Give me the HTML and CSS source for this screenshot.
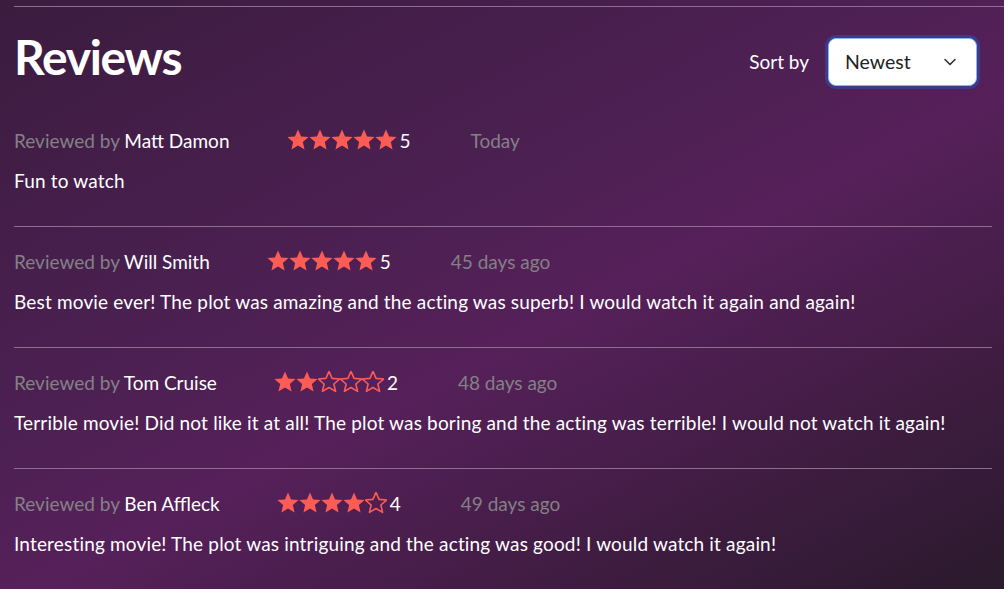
FILE: index.html
```html
<!DOCTYPE html>
<html>
<head>
<meta charset="utf-8">
<link rel="stylesheet" href="styles.css">
</head>
<body>
<div class="page">
  <div class="topline"></div>
  <div class="wrap">
    <header class="header">
      <h1 class="title">Reviews</h1>
      <div class="sort">
        <span class="sort-label">Sort by</span>
        <div class="select">
          <span>Newest</span>
          <svg class="chev" width="14" height="14" viewBox="0 0 14 14"><path d="M2 4.5 L7 9.5 L12 4.5" fill="none" stroke="#333" stroke-width="1.6" stroke-linecap="round" stroke-linejoin="round"/></svg>
        </div>
      </div>
    </header>

    <div class="review">
      <div class="meta">
        <span class="by">Reviewed by <span class="name">Matt Damon</span></span>
        <span class="rating">
          <svg class="star" viewBox="1.6 1.8 20.8 20.8"><path class="full" d="M12 2.2l2.9 6.6 7.1.6-5.4 4.7 1.6 7-6.2-3.7-6.2 3.7 1.6-7L2 9.4l7.1-.6z"/></svg><svg class="star" viewBox="1.6 1.8 20.8 20.8"><path class="full" d="M12 2.2l2.9 6.6 7.1.6-5.4 4.7 1.6 7-6.2-3.7-6.2 3.7 1.6-7L2 9.4l7.1-.6z"/></svg><svg class="star" viewBox="1.6 1.8 20.8 20.8"><path class="full" d="M12 2.2l2.9 6.6 7.1.6-5.4 4.7 1.6 7-6.2-3.7-6.2 3.7 1.6-7L2 9.4l7.1-.6z"/></svg><svg class="star" viewBox="1.6 1.8 20.8 20.8"><path class="full" d="M12 2.2l2.9 6.6 7.1.6-5.4 4.7 1.6 7-6.2-3.7-6.2 3.7 1.6-7L2 9.4l7.1-.6z"/></svg><svg class="star" viewBox="1.6 1.8 20.8 20.8"><path class="full" d="M12 2.2l2.9 6.6 7.1.6-5.4 4.7 1.6 7-6.2-3.7-6.2 3.7 1.6-7L2 9.4l7.1-.6z"/></svg><span class="num">5</span>
        </span>
        <span class="date">Today</span>
      </div>
      <p class="text">Fun to watch</p>
    </div>

    <div class="review">
      <div class="meta">
        <span class="by">Reviewed by <span class="name">Will Smith</span></span>
        <span class="rating">
          <svg class="star" viewBox="1.6 1.8 20.8 20.8"><path class="full" d="M12 2.2l2.9 6.6 7.1.6-5.4 4.7 1.6 7-6.2-3.7-6.2 3.7 1.6-7L2 9.4l7.1-.6z"/></svg><svg class="star" viewBox="1.6 1.8 20.8 20.8"><path class="full" d="M12 2.2l2.9 6.6 7.1.6-5.4 4.7 1.6 7-6.2-3.7-6.2 3.7 1.6-7L2 9.4l7.1-.6z"/></svg><svg class="star" viewBox="1.6 1.8 20.8 20.8"><path class="full" d="M12 2.2l2.9 6.6 7.1.6-5.4 4.7 1.6 7-6.2-3.7-6.2 3.7 1.6-7L2 9.4l7.1-.6z"/></svg><svg class="star" viewBox="1.6 1.8 20.8 20.8"><path class="full" d="M12 2.2l2.9 6.6 7.1.6-5.4 4.7 1.6 7-6.2-3.7-6.2 3.7 1.6-7L2 9.4l7.1-.6z"/></svg><svg class="star" viewBox="1.6 1.8 20.8 20.8"><path class="full" d="M12 2.2l2.9 6.6 7.1.6-5.4 4.7 1.6 7-6.2-3.7-6.2 3.7 1.6-7L2 9.4l7.1-.6z"/></svg><span class="num">5</span>
        </span>
        <span class="date">45 days ago</span>
      </div>
      <p class="text">Best movie ever! The plot was amazing and the acting was superb! I would watch it again and again!</p>
    </div>

    <div class="review">
      <div class="meta">
        <span class="by">Reviewed by <span class="name">Tom Cruise</span></span>
        <span class="rating">
          <svg class="star" viewBox="1.6 1.8 20.8 20.8"><path class="full" d="M12 2.2l2.9 6.6 7.1.6-5.4 4.7 1.6 7-6.2-3.7-6.2 3.7 1.6-7L2 9.4l7.1-.6z"/></svg><svg class="star" viewBox="1.6 1.8 20.8 20.8"><path class="full" d="M12 2.2l2.9 6.6 7.1.6-5.4 4.7 1.6 7-6.2-3.7-6.2 3.7 1.6-7L2 9.4l7.1-.6z"/></svg><svg class="star" viewBox="1.6 1.8 20.8 20.8"><path class="empty" d="M12 2.2l2.9 6.6 7.1.6-5.4 4.7 1.6 7-6.2-3.7-6.2 3.7 1.6-7L2 9.4l7.1-.6z"/></svg><svg class="star" viewBox="1.6 1.8 20.8 20.8"><path class="empty" d="M12 2.2l2.9 6.6 7.1.6-5.4 4.7 1.6 7-6.2-3.7-6.2 3.7 1.6-7L2 9.4l7.1-.6z"/></svg><svg class="star" viewBox="1.6 1.8 20.8 20.8"><path class="empty" d="M12 2.2l2.9 6.6 7.1.6-5.4 4.7 1.6 7-6.2-3.7-6.2 3.7 1.6-7L2 9.4l7.1-.6z"/></svg><span class="num">2</span>
        </span>
        <span class="date">48 days ago</span>
      </div>
      <p class="text">Terrible movie! Did not like it at all! The plot was boring and the acting was terrible! I would not watch it again!</p>
    </div>

    <div class="review">
      <div class="meta">
        <span class="by">Reviewed by <span class="name">Ben Affleck</span></span>
        <span class="rating">
          <svg class="star" viewBox="1.6 1.8 20.8 20.8"><path class="full" d="M12 2.2l2.9 6.6 7.1.6-5.4 4.7 1.6 7-6.2-3.7-6.2 3.7 1.6-7L2 9.4l7.1-.6z"/></svg><svg class="star" viewBox="1.6 1.8 20.8 20.8"><path class="full" d="M12 2.2l2.9 6.6 7.1.6-5.4 4.7 1.6 7-6.2-3.7-6.2 3.7 1.6-7L2 9.4l7.1-.6z"/></svg><svg class="star" viewBox="1.6 1.8 20.8 20.8"><path class="full" d="M12 2.2l2.9 6.6 7.1.6-5.4 4.7 1.6 7-6.2-3.7-6.2 3.7 1.6-7L2 9.4l7.1-.6z"/></svg><svg class="star" viewBox="1.6 1.8 20.8 20.8"><path class="full" d="M12 2.2l2.9 6.6 7.1.6-5.4 4.7 1.6 7-6.2-3.7-6.2 3.7 1.6-7L2 9.4l7.1-.6z"/></svg><svg class="star" viewBox="1.6 1.8 20.8 20.8"><path class="empty" d="M12 2.2l2.9 6.6 7.1.6-5.4 4.7 1.6 7-6.2-3.7-6.2 3.7 1.6-7L2 9.4l7.1-.6z"/></svg><span class="num">4</span>
        </span>
        <span class="date">49 days ago</span>
      </div>
      <p class="text">Interesting movie! The plot was intriguing and the acting was good! I would watch it again!</p>
    </div>
  </div>
</div>
</body>
</html>
```

FILE: styles.css
```css
html, body {
  margin: 0;
  padding: 0;
  height: 100%;
}
body {
  background: linear-gradient(153deg, #3b1c3f 0%, #4a2050 35%, #56205a 55%, #3e1c40 80%, #2a1a2c 100%);
  font-family: "Lato", "Liberation Sans", sans-serif;
  color: #ffffff;
  overflow: hidden;
}
.page {
  min-height: 589px;
}
.topline {
  margin: 6px 0 0 14px;
  height: 1px;
  background: #8c6f8e;
}
.wrap {
  padding: 0 12px 0 14px;
}
.header {
  height: 99px;
  display: flex;
  align-items: center;
  justify-content: space-between;
  padding-right: 15px;
}
.title {
  margin: 0;
  font-size: 48px;
  font-weight: 700;
  letter-spacing: -1.3px;
  line-height: 1;
}
.sort {
  display: flex;
  align-items: center;
  gap: 19px;
  margin-top: 10px;
}
.sort-label {
  font-size: 19px;
}
.select {
  width: 149px;
  height: 48px;
  box-sizing: border-box;
  background: #fff;
  border: 1px solid #8fb3f2;
  border-radius: 8px;
  box-shadow: 0 0 0 3px #3d3a88;
  display: flex;
  align-items: center;
  justify-content: space-between;
  padding: 0 19px 0 16px;
  color: #222;
  font-size: 19.5px;
}
.chev {
  display: block;
}
.review {
  padding: 22px 0 33px;
  border-bottom: 1px solid #8c6f8e;
}
.meta {
  display: flex;
  align-items: center;
  gap: 60px;
  height: 24px;
  font-size: 19px;
}
.by {
  color: #848086;
}
.name {
  color: #fff;
}
.rating {
  display: flex;
  align-items: center;
  margin-left: -3px;
}
.star {
  width: 22px;
  height: 22px;
  display: block;
}
.star .full {
  fill: #fd5c55;
}
.star .empty {
  fill: none;
  stroke: #fd5c55;
  stroke-width: 1.5;
  stroke-linejoin: round;
}
.num {
  margin-left: 3px;
  color: #fff;
}
.date {
  color: #848086;
}
.text {
  margin: 17px 0 0;
  line-height: 24px;
  font-size: 19px;
  letter-spacing: 0.17px;
}
```
